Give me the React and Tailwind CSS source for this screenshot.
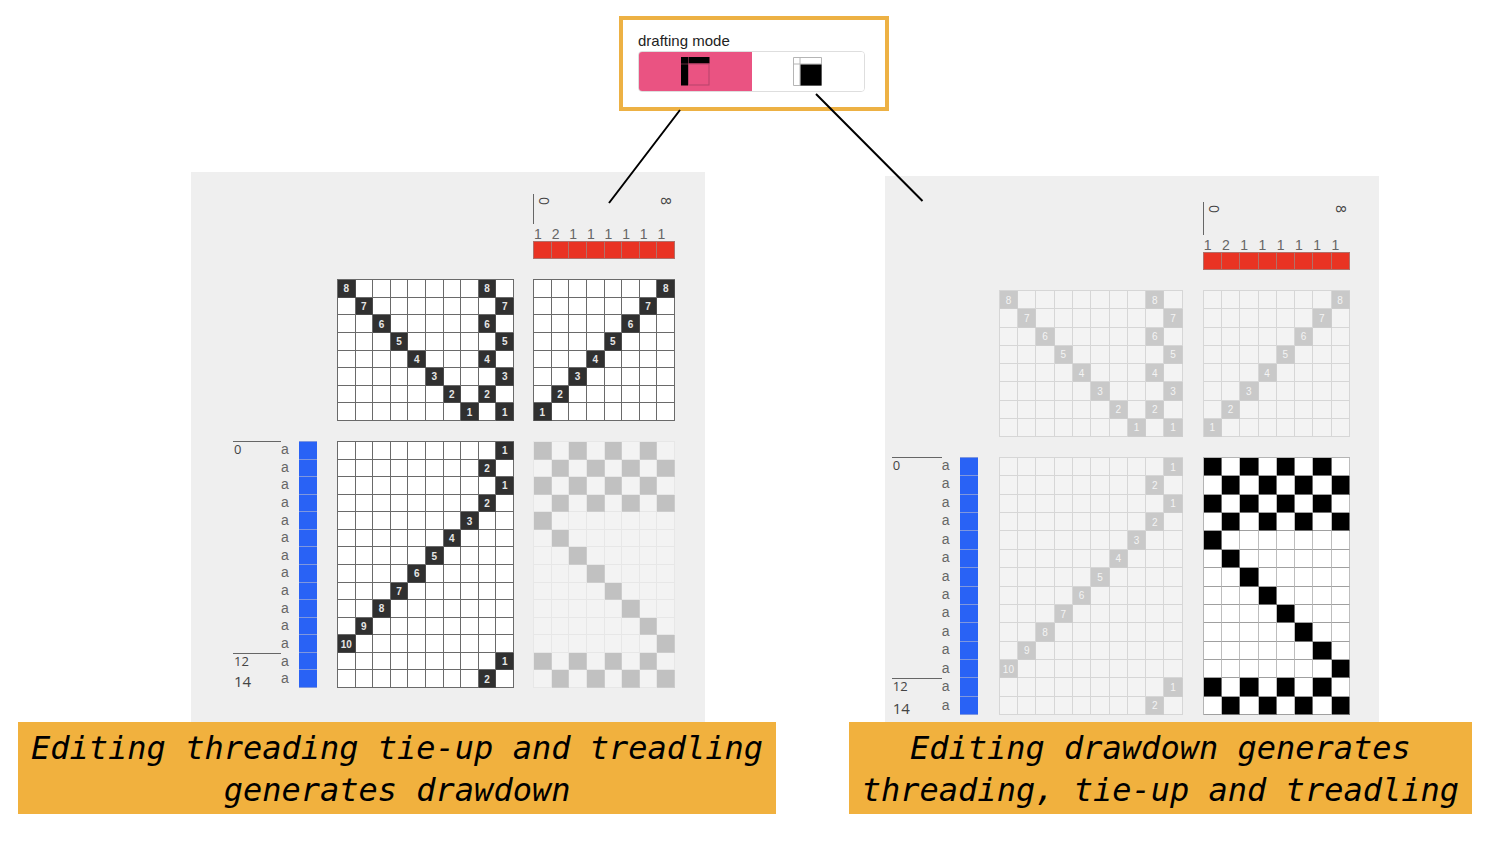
import React, { useState } from 'react';

const TREADLES = [1, 2, 1, 2, 3, 4, 5, 6, 7, 8, 9, 10, 1, 2];

// Each pattern is a list of rows; a cell holds null (empty) or the label of a filled cell.
const topLeft = Array.from({ length: 8 }, (_, r) =>
  Array.from({ length: 10 }, (_, c) => {
    const shaft = 8 - r;
    if (c < 8) return c === r ? shaft : null;
    return (shaft % 2 === 0) === (c === 8) ? shaft : null;
  })
);

const topRight = Array.from({ length: 8 }, (_, r) =>
  Array.from({ length: 8 }, (_, c) => (c === 7 - r ? 8 - r : null))
);

const bottomLeft = TREADLES.map((t) =>
  Array.from({ length: 10 }, (_, c) => (c === 10 - t ? t : null))
);

const drawdown = TREADLES.map((t, r) =>
  Array.from({ length: 8 }, (_, c) => {
    const plain = r < 4 || r > 11;
    const filled = plain ? c % 2 === r % 2 : c === r - 4;
    return filled ? '' : null;
  })
);

const THEMES = {
  active: {
    frame: 'border-[#6a6a6a]',
    empty: 'border-[#6a6a6a] bg-white',
    filled: 'border-[#4a4a4a] bg-[#303030] text-[#e6e6e6] font-bold',
  },
  faded: {
    frame: 'border-[#d6d6d6]',
    empty: 'border-[#d6d6d6] bg-[#f3f3f3]',
    filled: 'border-[#cdcdcd] bg-[#c9c9c9] text-[#f4f4f4]',
  },
  fadedCloth: {
    frame: 'border-[#e7e7e7]',
    empty: 'border-[#e7e7e7] bg-[#f3f3f3]',
    filled: 'border-[#cccccc] bg-[#c1c1c1]',
  },
  cloth: {
    frame: 'border-[#b4b4b4]',
    empty: 'border-b-[#a0a0a0] border-r-[#bdbdbd] bg-white',
    filled: 'border-[#6f6f6f] bg-black',
  },
};

function CellGrid({ rows, theme, label }) {
  const t = THEMES[theme];
  const cols = rows[0].length === 10 ? 'grid-cols-10' : 'grid-cols-8';
  return (
    <div
      role="img"
      aria-label={label}
      className={`grid h-full auto-rows-fr border-l border-t ${cols} ${t.frame}`}
    >
      {rows.flatMap((row, r) =>
        row.map((v, c) => (
          <span
            key={`${r}-${c}`}
            className={`flex min-h-0 min-w-0 items-center justify-center border-b border-r pt-0.5 text-[10px] leading-[10px] ${
              v === null ? t.empty : t.filled
            }`}
          >
            {v}
          </span>
        ))
      )}
    </div>
  );
}

function WarpHeader() {
  return (
    <div className="flex h-full flex-col">
      <div className="flex flex-1 items-start justify-between border-l border-[#666] pl-0.5 pr-px pt-[3px] font-['Open_Sans',sans-serif] text-sm leading-4 text-[#444]">
        <span className="[writing-mode:vertical-rl]">0</span>
        <span className="[writing-mode:vertical-rl]">8</span>
      </div>
      <div className="grid h-[17px] grid-cols-8 items-end pl-px text-sm leading-[14px] text-[#666]">
        {[1, 2, 1, 1, 1, 1, 1, 1].map((n, i) => (
          <span key={i}>{n}</span>
        ))}
      </div>
      <div className="grid h-[18px] grid-cols-8 border-l border-t border-[#b0706a]">
        {Array.from({ length: 8 }, (_, i) => (
          <span key={i} className="border-b border-r border-[#b0706a] bg-[#e93323]" />
        ))}
      </div>
    </div>
  );
}

function WeftSide({ tickClass }) {
  return (
    <div className="flex h-full pr-px">
      <div className={`grid grid-rows-14 font-['Open_Sans',sans-serif] text-[13px] leading-[14px] text-[#444] ${tickClass}`}>
        <span className="row-start-1 min-h-0 border-t border-[#666] pl-px">0</span>
        <span className="row-start-13 min-h-0 border-t border-[#666] pl-px">12</span>
        <span className="row-start-14 min-h-0 self-end pl-px text-[15px] leading-[14px]">14</span>
      </div>
      <div className="grid flex-1 auto-rows-fr text-sm leading-4 text-[#666]">
        {TREADLES.map((_, i) => (
          <span key={i} className="min-h-0">a</span>
        ))}
      </div>
      <div className="grid w-[18px] auto-rows-fr border-t border-[#7f97dd]">
        {TREADLES.map((_, i) => (
          <span key={i} className="min-h-0 border-b border-[#7f97dd] bg-[#2962f5]" />
        ))}
      </div>
    </div>
  );
}

function Draft({ frameClass, gridClass, tickClass, structure, cloth }) {
  return (
    <div className={`bg-[#efefef] ${frameClass}`}>
      <div className={`grid gap-y-5 ${gridClass}`}>
        <div className="col-start-3">
          <WarpHeader />
        </div>
        <div className="col-start-2">
          <CellGrid rows={topLeft} theme={structure} label="Threading" />
        </div>
        <div>
          <CellGrid rows={topRight} theme={structure} label="Tie-up" />
        </div>
        <WeftSide tickClass={tickClass} />
        <CellGrid rows={bottomLeft} theme={structure} label="Treadling" />
        <CellGrid rows={drawdown} theme={cloth} label="Drawdown" />
      </div>
    </div>
  );
}

function Caption({ lines }) {
  return (
    <figcaption className="bg-[#f1b13e] px-[13px] pb-[3px] pt-[5px] text-center font-['DejaVu_Sans_Mono',monospace] text-[32px] italic leading-[42px] text-black">
      {lines.map((line) => (
        <span key={line} className="block whitespace-nowrap">{line}</span>
      ))}
    </figcaption>
  );
}

function StructureIcon() {
  return (
    <svg width="29" height="29" viewBox="0 0 29 29" aria-hidden="true">
      <rect x="0" y="0" width="28.5" height="6.5" fill="#000" />
      <rect x="0" y="0" width="7" height="28.5" fill="#000" />
      <path d="M7.5 0v7M0 7h7" stroke="#7c3349" strokeWidth="0.8" />
      <rect x="7.5" y="7" width="20.5" height="21" fill="none" stroke="#b5446a" strokeWidth="1" />
    </svg>
  );
}

function DrawdownIcon() {
  return (
    <svg width="29" height="29" viewBox="0 0 29 29" aria-hidden="true">
      <path d="M0.5 0.5h28v28H0.5zM7 0.5v28M0.5 7h28" fill="#fff" stroke="#b5b5b5" strokeWidth="1" />
      <rect x="7.500" y="7.5" width="21" height="21" fill="#000" />
    </svg>
  );
}

function ModePicker() {
  const [mode, setMode] = useState('structure');
  const base = 'flex flex-1 items-center justify-center';
  return (
    <div className="relative w-[270px] border-4 border-[#edb144] bg-white pb-[15px] pl-[15px] pr-5 pt-[11px]">
      <div id="drafting-mode" className="text-[15px] leading-5 text-[#222]">drafting mode</div>
      <div
        role="group"
        aria-labelledby="drafting-mode"
        className="flex h-[41px] overflow-hidden rounded border border-[#dedede]"
      >
        <button
          type="button"
          aria-label="Edit threading, tie-up and treadling"
          aria-pressed={mode === 'structure'}
          onClick={() => setMode('structure')}
          className={`${base} ${mode === 'structure' ? 'bg-[#ea5382]' : 'bg-white'}`}
        >
          <StructureIcon />
        </button>
        <button
          type="button"
          aria-label="Edit drawdown"
          aria-pressed={mode === 'drawdown'}
          onClick={() => setMode('drawdown')}
          className={`${base} ${mode === 'drawdown' ? 'bg-[#ea5382]' : 'bg-white'}`}
        >
          <DrawdownIcon />
        </button>
      </div>
      <svg
        className="pointer-events-none absolute left-0 top-0 z-10 overflow-visible"
        width="262"
        height="87"
        aria-hidden="true"
      >
        <path d="M57 90L-14 183M193 74L299.5 181" fill="none" stroke="#000" strokeWidth="2" />
      </svg>
    </div>
  );
}

export default function App() {
  return (
    <main className="min-h-screen bg-white pt-4 font-['Liberation_Sans',Arial,sans-serif]">
      <header className="flex justify-center pl-[15px]">
        <ModePicker />
      </header>
      <div className="mt-[61px] flex items-end justify-between pl-[18px] pr-[21px]">
        <figure className="flex flex-col">
          <Draft
            frameClass="ml-[173px] mr-[71px] pb-[34px] pl-[42px] pt-[22px]"
            gridClass="grid-cols-[85px_177px_142px] grid-rows-[65px_142px_247px] gap-x-[19px]"
            tickClass="w-12"
            structure="active"
            cloth="fadedCloth"
          />
          <Caption lines={['Editing threading tie-up and treadling', 'generates drawdown']} />
        </figure>
        <figure className="flex flex-col">
          <Draft
            frameClass="ml-9 mr-[93px] pb-[7px] pl-[7px] pt-[26px]"
            gridClass="grid-cols-[87px_184px_147px] grid-rows-[68px_147px_258px] gap-x-5"
            tickClass="w-[50px]"
            structure="faded"
            cloth="cloth"
          />
          <Caption lines={['Editing drawdown generates', 'threading, tie-up and treadling']} />
        </figure>
      </div>
    </main>
  );
}
